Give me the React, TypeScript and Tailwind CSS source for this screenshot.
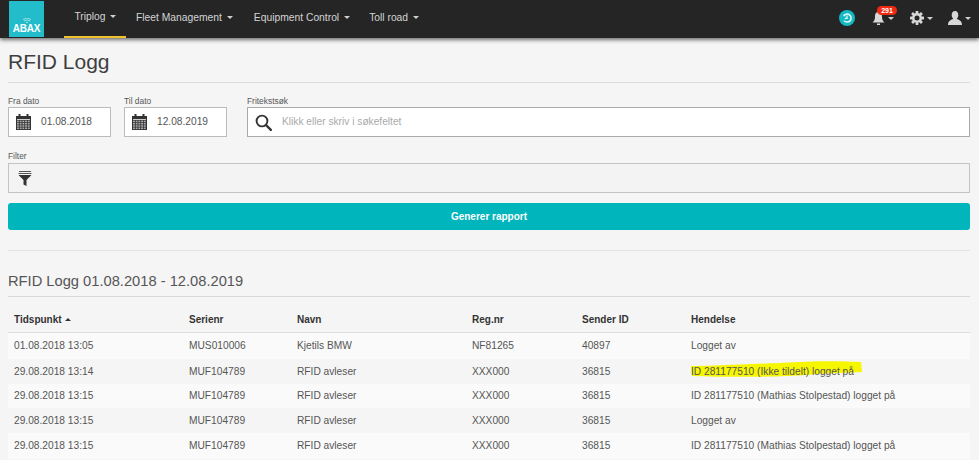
import React from "react";

const Caret = ({ c = "border-t-[#cfcfcf]" }: { c?: string }) => (
  <span className={`inline-block w-0 h-0 border-x-[3px] border-x-transparent border-t-[3px] ${c}`} />
);

const Calendar = () => (
  <svg width="15" height="16" viewBox="0 0 15 16" className="shrink-0">
    <rect x="0" y="2" width="15" height="14" fill="#333" />
    <rect x="2.5" y="0" width="2" height="4" fill="#333" />
    <rect x="10.5" y="0" width="2" height="4" fill="#333" />
    <rect x="1" y="5" width="13" height="0.8" fill="#f5f5f5" />
    {[0, 1, 2, 3].map((r) =>
      [0, 1, 2, 3, 4].map((c) => (
        <rect key={`${r}-${c}`} x={1 + c * 2.7} y={6.6 + r * 2.3} width="1.9" height="1.6" fill="#aaa" />
      ))
    )}
  </svg>
);

const rows = [
  ["01.08.2018 13:05", "MUS010006", "Kjetils BMW", "NF81265", "40897", "Logget av"],
  ["29.08.2018 13:14", "MUF104789", "RFID avleser", "XXX000", "36815", "ID 281177510 (Ikke tildelt) logget på"],
  ["29.08.2018 13:15", "MUF104789", "RFID avleser", "XXX000", "36815", "ID 281177510 (Mathias Stolpestad) logget på"],
  ["29.08.2018 13:15", "MUF104789", "RFID avleser", "XXX000", "36815", "Logget av"],
  ["29.08.2018 13:15", "MUF104789", "RFID avleser", "XXX000", "36815", "ID 281177510 (Mathias Stolpestad) logget på"],
];
const heights = ["h-[26px]", "h-[25px]", "h-[24px]", "h-[25px]", "h-[26px]"];
const cols = "grid grid-cols-[175px_108px_175px_110px_109px_1fr] pl-[6px] items-center";

export default function App() {
  return (
    <div className="w-[979px] h-[460px] overflow-hidden bg-[#f5f5f5] text-[#555] [font-family:Liberation_Sans,Arial,sans-serif]">
      <nav className="relative z-10 h-[38px] bg-[#252525] shadow-[0_2px_4px_rgba(0,0,0,0.55)] flex pl-[9px] items-stretch">
        <div className="w-[35px] h-[36px] mt-[1px] bg-[#22bccb] flex flex-col items-center justify-end pb-[3px]">
          <svg width="8" height="5" viewBox="0 0 8 5" className="mb-[1px]">
            <path d="M0 1.5 L4 0 L8 1.5 M1 3 L4 2 L7 3 M3 4.5 H5" stroke="#cdeff3" strokeWidth="0.7" fill="none" />
          </svg>
          <span className="text-white font-bold text-[10px] leading-[10px] tracking-[-0.2px]">ABAX</span>
        </div>
        <div className="ml-[20px] flex text-[10.3px] text-[#d4d4d4]">
          <div className="w-[62px] border-b-[2px] border-[#eec22c] flex items-center justify-center gap-[4px] pb-[3px]">
            Triplog <Caret />
          </div>
          <div className="ml-[10px] flex items-center gap-[5px] pb-[3px]">Fleet Management <Caret /></div>
          <div className="ml-[21px] flex items-center gap-[5px] pb-[3px]">Equipment Control <Caret /></div>
          <div className="ml-[19px] flex items-center gap-[5px] pb-[3px]">Toll road <Caret /></div>
        </div>
        <div className="ml-auto flex items-center pr-[8px] pb-[2px]">
          <svg width="16" height="16" viewBox="0 0 16 16">
            <circle cx="8" cy="8" r="8" fill="#14b9c2" />
            <path d="M4.6 6.2 A4 4 0 1 1 5 10.6" stroke="#e8fbfb" strokeWidth="1.5" fill="none" />
            <path d="M8 5.6 V8.4 H5.8" stroke="#e8fbfb" strokeWidth="1.2" fill="none" />
          </svg>
          <div className="relative ml-[17px] flex items-center gap-[3px]">
            <svg width="13" height="15" viewBox="0 0 13 15">
              <path d="M6.5 1 C9.5 1 10 3.5 10 6 C10 9 11 10 12.5 11.5 H0.5 C2 10 3 9 3 6 C3 3.5 3.5 1 6.5 1 Z" fill="#d8d8d8" />
              <rect x="5" y="12.5" width="3" height="1.5" fill="#d8d8d8" />
            </svg>
            <Caret />
            <span className="absolute -top-[5px] left-[5px] h-[9px] w-[20px] rounded-full bg-[#f02a10] text-white font-bold text-[7px] leading-[9px] text-center">291</span>
          </div>
          <div className="ml-[16px] flex items-center gap-[3px]">
            <svg width="14" height="14" viewBox="0 0 14 14">
              <circle cx="7" cy="7" r="3.8" fill="none" stroke="#d8d8d8" strokeWidth="2.6" />
              {[0, 45, 90, 135, 180, 225, 270, 315].map((a) => (
                <rect key={a} x="5.6" y="0" width="2.8" height="2.6" rx="0.4" fill="#d8d8d8" transform={`rotate(${a} 7 7)`} />
              ))}
            </svg>
            <Caret />
          </div>
          <div className="ml-[15px] flex items-center gap-[3px]">
            <svg width="14" height="14" viewBox="0 0 14 14">
              <path d="M7 0 C9.3 0 10.3 1.8 10.3 4 C10.3 5.8 9.6 7 8.8 7.8 C10.5 9 14 9.6 14 14 H0 C0 9.6 3.5 9 5.2 7.8 C4.4 7 3.7 5.8 3.7 4 C3.7 1.8 4.7 0 7 0 Z" fill="#d8d8d8" />
            </svg>
            <Caret />
          </div>
        </div>
      </nav>

      <main className="pl-[8px] pr-[9px]">
        <h1 className="mt-[10px] text-[21px] leading-[28px] text-[#3f3f3f] font-normal">RFID Logg</h1>
        <div className="mt-[6px] h-px bg-[#dcdcdc]" />

        <div className="mt-[13px] flex text-[8.4px] text-[#555]">
          <div className="w-[103px]">
            <div className="leading-[11px] h-[11px]">Fra dato</div>
            <div className="h-[30px] bg-white border border-[#bbb] flex items-center pl-[7px] text-[10.2px] gap-[10px]">
              <Calendar />01.08.2018
            </div>
          </div>
          <div className="ml-[13px] w-[103px]">
            <div className="leading-[11px] h-[11px]">Til dato</div>
            <div className="h-[30px] bg-white border border-[#bbb] flex items-center pl-[7px] text-[10.2px] gap-[10px]">
              <Calendar />12.08.2019
            </div>
          </div>
          <div className="ml-[20px] flex-1">
            <div className="leading-[11px] h-[11px]">Fritekstsøk</div>
            <div className="h-[30px] bg-white border border-[#aaa] flex items-center pl-[7px] text-[10.2px] gap-[10px] text-[#aaa]">
              <svg width="17" height="17" viewBox="0 0 17 17" className="shrink-0">
                <circle cx="7" cy="7" r="5.4" fill="none" stroke="#333" strokeWidth="1.9" />
                <path d="M11 11 L15.8 15.8" stroke="#333" strokeWidth="2.4" strokeLinecap="round" />
              </svg>
              Klikk eller skriv i søkefeltet
            </div>
          </div>
        </div>

        <div className="mt-[14px] text-[8.4px] leading-[11px] h-[11px]">Filter</div>
        <div className="mt-[1px] h-[30px] border border-[#c4c4c4] bg-[#f3f3f3] flex items-center pl-[9px]">
          <svg width="14" height="15" viewBox="0 0 14 15">
            <rect x="1" y="0" width="12" height="1" fill="#555" />
            <rect x="0.5" y="2" width="13" height="1" fill="#555" />
            <path d="M0.5 4 H13.5 L8.5 9 V15 L5.5 13.5 V9 Z" fill="#333" />
          </svg>
        </div>

        <button className="mt-[10px] w-full h-[27px] rounded-[3px] bg-[#00b5bc] text-white font-bold text-[10px] flex items-center justify-center">
          Generer rapport
        </button>

        <div className="mt-[20px] h-px bg-[#e4e4e4]" />
        <h2 className="mt-[20px] text-[14.7px] leading-[20px] font-normal text-[#555]">RFID Logg 01.08.2018 - 12.08.2019</h2>
        <div className="mt-[5px] h-px bg-[#d8d8d8]" />

        <div className="text-[10.2px]">
          <div className={`${cols} h-[36px] pt-[10px] text-[10px] font-bold text-[#333] border-b border-[#dedede]`}>
            <div className="flex items-center gap-[3px]">
              Tidspunkt
              <span className="inline-block w-0 h-0 border-x-[3px] border-x-transparent border-b-[3px] border-b-[#333]" />
            </div>
            <div>Serienr</div><div>Navn</div><div>Reg.nr</div><div>Sender ID</div><div>Hendelse</div>
          </div>
          {rows.map((r, i) => (
            <div key={i} className={`${cols} ${heights[i]} ${i % 2 === 0 ? "bg-[#fafafa]" : "bg-[#f5f5f5]"}`}>
              {r.map((v, j) => (
                <div key={j} className="relative whitespace-nowrap">
                  {j === 5 && i === 1 && (
                    <svg width="174" height="18" viewBox="0 0 174 18" className="absolute -left-[1px] -top-[3px]">
                      <path d="M1 5 C30 5 60 3 90 2 C120 0 150 0 171 1 L172 11 C160 12 140 12 125 13 C115 15 60 17 2 15 Z" fill="#f6f600" />
                    </svg>
                  )}
                  <span className="relative">{v}</span>
                </div>
              ))}
            </div>
          ))}
        </div>
      </main>
    </div>
  );
}
